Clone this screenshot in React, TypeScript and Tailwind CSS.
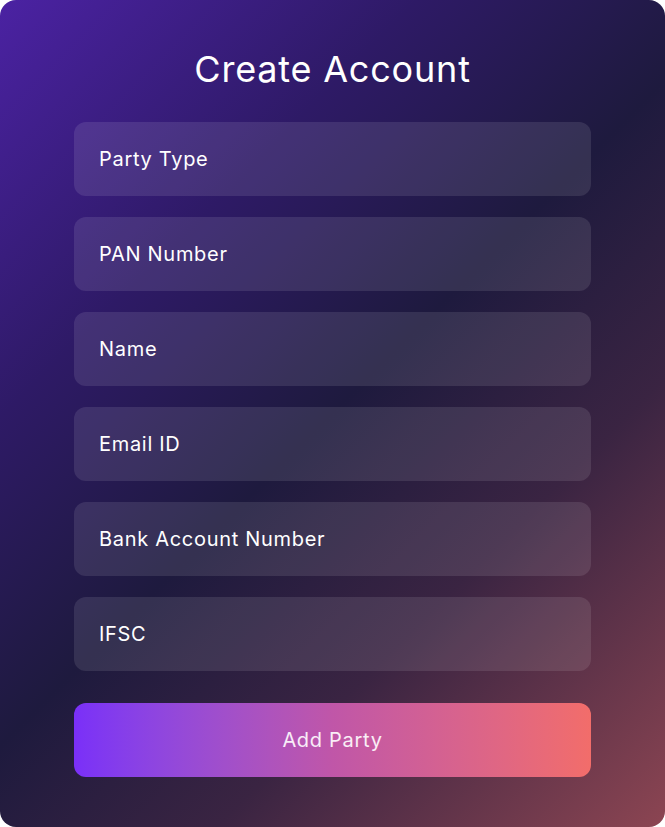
const fields = ["Party Type", "PAN Number", "Name", "Email ID", "Bank Account Number", "IFSC"];

export default function App() {
  return (
    <div className="w-[665px] h-[827px] bg-white">
      <div
        className="w-full h-full rounded-2xl flex flex-col px-[74px] pt-[42px] bg-[linear-gradient(135deg,#4b22a3_0%,#2e1a66_28%,#1e1a3e_50%,#3a2442_70%,#8c4552_100%)]"
        style={{ fontFamily: "Inter, 'Open Sans', sans-serif" }}
      >
        <h1 className="text-center text-white text-[36px] leading-[54px] font-normal tracking-[0.8px]">
          Create Account
        </h1>
        <form className="flex flex-col gap-[21px] mt-[26px]">
          {fields.map((f) => (
            <input
              key={f}
              type="text"
              placeholder={f}
              className="h-[74px] w-full rounded-xl bg-white/10 px-[25px] text-[20px] tracking-[0.7px] text-white placeholder:text-white outline-none"
            />
          ))}
          <button
            type="button"
            className="mt-[11px] h-[74px] w-full rounded-xl bg-gradient-to-r from-[#7a2ff8] via-[#c056a8] to-[#f26d6a] text-[20px] tracking-[0.7px] text-white/90"
          >
            Add Party
          </button>
        </form>
      </div>
    </div>
  );
}
